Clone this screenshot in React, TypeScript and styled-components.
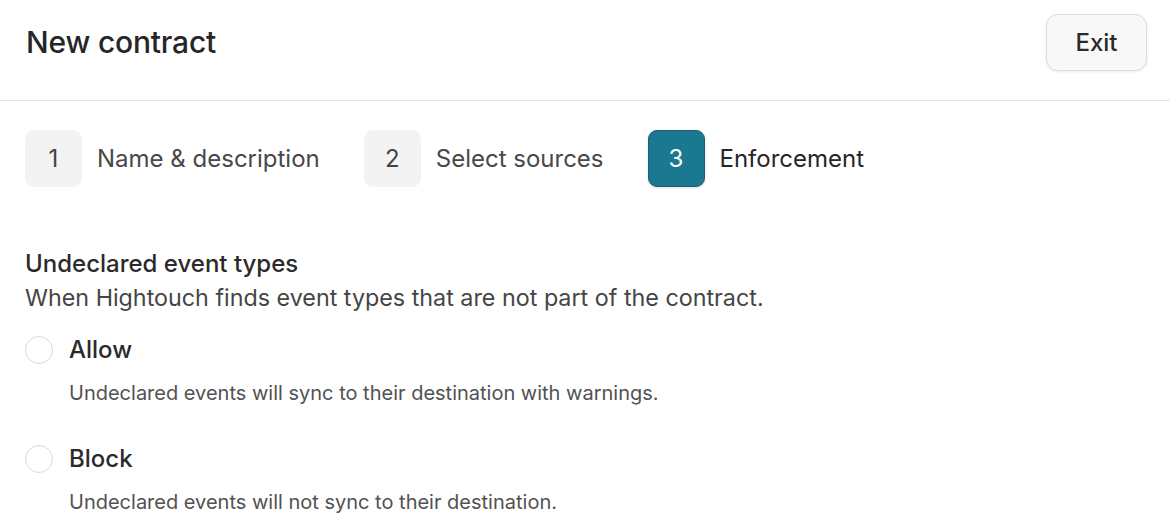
import React, { useState } from 'react';
import styled, { createGlobalStyle } from 'styled-components';

const GlobalStyle = createGlobalStyle`
  * { box-sizing: border-box; }
  body {
    margin: 0;
    background: #ffffff;
    font-family: Inter, "Noto Sans", "Liberation Sans", sans-serif;
    color: #2a2a2a;
  }
`;

const Header = styled.header`
  height: 101px;
  display: flex;
  align-items: center;
  justify-content: space-between;
  padding: 0 23px 16px 26px;
  border-bottom: 1px solid #e2e2e2;
`;

const Title = styled.h1`
  margin: 0;
  font-size: 30px;
  font-weight: 500;
  letter-spacing: -0.2px;
  color: #262626;
`;

const ExitButton = styled.button`
  width: 101px;
  height: 57px;
  border: 1px solid #dcdcdc;
  border-radius: 12px;
  background: #f8f8f8;
  box-shadow: 0 1px 3px rgba(0, 0, 0, 0.08);
  font-family: inherit;
  font-size: 24px;
  font-weight: 500;
  color: #2a2a2a;
  cursor: pointer;
`;

const Body = styled.main`
  padding: 29px 25px 0;
`;

const Steps = styled.div`
  display: flex;
  align-items: center;
  gap: 44px;
`;

const Step = styled.div`
  display: flex;
  align-items: center;
  gap: 15px;
`;

const StepNumber = styled.div<{ active?: boolean }>`
  width: 57px;
  height: 57px;
  border-radius: 9px;
  display: flex;
  align-items: center;
  justify-content: center;
  font-size: 24px;
  background: ${p => (p.active ? '#1a7891' : '#f3f3f3')};
  color: ${p => (p.active ? '#ffffff' : '#444444')};
  border: 1px solid ${p => (p.active ? '#1d5d6e' : '#f3f3f3')};
  box-shadow: ${p => (p.active ? '0 1px 3px rgba(0,0,0,0.12)' : 'none')};
`;

const StepLabel = styled.span<{ active?: boolean }>`
  font-size: 24px;
  color: ${p => (p.active ? '#262626' : '#484848')};
`;

const Section = styled.section`
  margin-top: 60px;
`;

const SectionTitle = styled.h2`
  margin: 0;
  font-size: 24px;
  font-weight: 450;
  line-height: 34px;
  color: #2a2a2a;
`;

const SectionDesc = styled.p`
  margin: 0;
  font-size: 23.3px;
  line-height: 34px;
  color: #454545;
`;

const Options = styled.div`
  margin-top: 21px;
  display: flex;
  flex-direction: column;
  gap: 38px;
`;

const Option = styled.label`
  display: flex;
  flex-direction: column;
  gap: 15px;
  cursor: pointer;
`;

const OptionRow = styled.div`
  display: flex;
  align-items: center;
  gap: 16px;
`;

const Radio = styled.span<{ checked?: boolean }>`
  width: 28px;
  height: 28px;
  border-radius: 50%;
  border: 1px solid #dadada;
  background: #ffffff;
  display: flex;
  align-items: center;
  justify-content: center;

  &::after {
    content: '';
    width: 12px;
    height: 12px;
    border-radius: 50%;
    background: ${p => (p.checked ? '#1a7891' : 'transparent')};
  }
`;

const OptionLabel = styled.span`
  font-size: 24px;
  line-height: 28px;
  font-weight: 450;
  color: #2a2a2a;
`;

const OptionHint = styled.span`
  padding-left: 44px;
  font-size: 20px;
  line-height: 28px;
  color: #525252;
`;

const steps = ['Name & description', 'Select sources', 'Enforcement'];

const options = [
  { id: 'allow', label: 'Allow', hint: 'Undeclared events will sync to their destination with warnings.' },
  { id: 'block', label: 'Block', hint: 'Undeclared events will not sync to their destination.' },
];

const App: React.FC = () => {
  const [choice, setChoice] = useState<string | null>(null);

  return (
    <>
      <GlobalStyle />
      <Header>
        <Title>New contract</Title>
        <ExitButton>Exit</ExitButton>
      </Header>
      <Body>
        <Steps>
          {steps.map((label, i) => (
            <Step key={label}>
              <StepNumber active={i === 2}>{i + 1}</StepNumber>
              <StepLabel active={i === 2}>{label}</StepLabel>
            </Step>
          ))}
        </Steps>

        <Section>
          <SectionTitle>Undeclared event types</SectionTitle>
          <SectionDesc>When Hightouch finds event types that are not part of the contract.</SectionDesc>
          <Options>
            {options.map(opt => (
              <Option key={opt.id} onClick={() => setChoice(opt.id)}>
                <OptionRow>
                  <Radio checked={choice === opt.id} />
                  <OptionLabel>{opt.label}</OptionLabel>
                </OptionRow>
                <OptionHint>{opt.hint}</OptionHint>
              </Option>
            ))}
          </Options>
        </Section>
      </Body>
    </>
  );
};

export default App;
